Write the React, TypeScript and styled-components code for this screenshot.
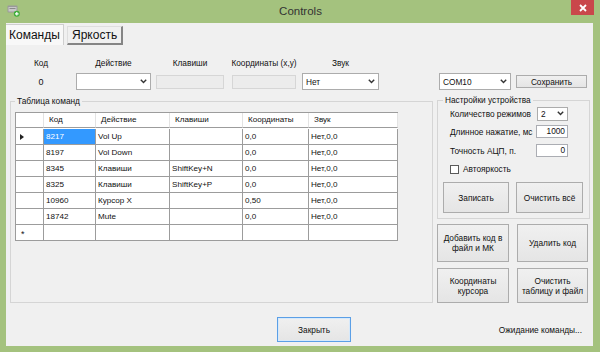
import React from "react";
import styled, { createGlobalStyle } from "styled-components";

const GlobalStyle = createGlobalStyle`
  html, body {
    margin: 0;
    padding: 0;
  }
  body {
    width: 600px;
    height: 352px;
    overflow: hidden;
    font-family: "Liberation Sans", Arial, sans-serif;
    color: #000;
  }
  * {
    box-sizing: border-box;
  }
`;

const Window = styled.div`
  width: 600px;
  height: 352px;
  background: #a4c27e;
  display: flex;
  flex-direction: column;
`;

const TitleBar = styled.div`
  height: 23px;
  flex: none;
  display: grid;
  grid-template-columns: 1fr auto 1fr;
  padding: 0 6px 0 7px;
`;

const TitleIcon = styled.svg`
  margin-top: 4px;
`;

const Title = styled.div`
  font-size: 11.5px;
  line-height: 22px;
  color: #333;
`;

const CloseBox = styled.div`
  justify-self: end;
  width: 23px;
  height: 15px;
  background: #c9474b;
  display: flex;
  align-items: center;
  justify-content: center;
`;

const Client = styled.div`
  flex: 1;
  margin: 0 7px 6px 6px;
  background: #f0f0f0;
  display: flex;
  flex-direction: column;
  font-size: 8.3px;
  color: #111;
`;

const TabStrip = styled.div`
  display: flex;
  align-items: flex-end;
  height: 22px;
  padding-top: 1px;
`;

const Tab = styled.div<{ $active?: boolean }>`
  font-size: 12px;
  width: ${(p) => (p.$active ? 58 : 56)}px;
  height: ${(p) => (p.$active ? 21 : 19)}px;
  margin-left: ${(p) => (p.$active ? 0 : 3)}px;
  padding-left: ${(p) => (p.$active ? 3 : 4)}px;
  line-height: ${(p) => (p.$active ? 20 : 16)}px;
  background: ${(p) => (p.$active ? "#f8f8f8" : "#f0f0f0")};
  border-top: 1px solid ${(p) => (p.$active ? "#cfcfcf" : "#dedede")};
  border-left: ${(p) => (p.$active ? "none" : "1px solid #dedede")};
  border-right: ${(p) => (p.$active ? "1px solid #cfcfcf" : "2px solid #858585")};
  border-bottom: ${(p) => (p.$active ? "none" : "2px solid #858585")};
  white-space: nowrap;
`;

const Body = styled.div`
  display: grid;
  grid-template-columns: 423px 153px;
  column-gap: 4px;
  padding: 13px 0 0 4px;
`;

const FieldsRow = styled.div`
  display: flex;
  align-items: flex-start;
`;

const Field = styled.div<{ $w: number; $ml: number }>`
  width: ${(p) => p.$w}px;
  margin-left: ${(p) => p.$ml}px;
  display: flex;
  flex-direction: column;
  align-items: center;
`;

const FieldLabel = styled.div`
  height: 11px;
  line-height: 11px;
  margin-bottom: 4px;
  white-space: nowrap;
`;

const Slot = styled.div`
  width: 100%;
  height: 17px;
  display: flex;
  align-items: center;
  justify-content: center;
`;

const Value = styled.span`
  font-size: 9px;
`;

const ComboBox = styled.div<{ $w?: number; $h?: number; $ml?: number }>`
  width: ${(p) => (p.$w ? `${p.$w}px` : "100%")};
  height: ${(p) => p.$h ?? 17}px;
  margin-left: ${(p) => p.$ml ?? 0}px;
  flex: none;
  background: #fff;
  border: 1px solid #acacac;
  display: flex;
  align-items: center;
  justify-content: space-between;
  padding: 0 3px 0 3px;
`;

const TextBox = styled.div<{ $disabled?: boolean; $w?: number; $h?: number }>`
  width: ${(p) => (p.$w ? `${p.$w}px` : "100%")};
  height: ${(p) => p.$h ?? 14}px;
  background: ${(p) => (p.$disabled ? "#ececec" : "#fff")};
  border: 1px solid ${(p) => (p.$disabled ? "#d6d6d6" : "#abadb3")};
  text-align: right;
  padding-right: 2px;
  line-height: ${(p) => (p.$h ?? 14) - 2}px;
`;

const TopRight = styled.div`
  padding-top: 15px;
  display: flex;
  align-items: center;
`;

const Button = styled.div<{ $w?: number; $h?: number; $ml?: number; $focus?: boolean }>`
  width: ${(p) => (p.$w ? `${p.$w}px` : "auto")};
  height: ${(p) => (p.$h ? `${p.$h}px` : "auto")};
  margin-left: ${(p) => p.$ml ?? 0}px;
  flex: none;
  background: linear-gradient(#f0f0f0, #e5e5e5);
  border: 1px solid ${(p) => (p.$focus ? "#5b9fe6" : "#acacac")};
  box-shadow: ${(p) => (p.$focus ? "inset 0 0 0 1px #d6e9fb" : "none")};
  display: flex;
  align-items: center;
  justify-content: center;
  text-align: center;
  line-height: 10px;
  padding: 0 2px;
`;

const Group = styled.fieldset<{ $h?: number; $mt: number; $pad: string }>`
  margin: ${(p) => p.$mt}px 0 0 0;
  min-width: 0;
  height: ${(p) => (p.$h ? `${p.$h}px` : "auto")};
  border: 1px solid #d5d5d5;
  padding: ${(p) => p.$pad};
`;

const Legend = styled.legend`
  font-size: 8.3px;
  line-height: 10px;
  padding: 0 2px;
`;

const GridView = styled.div`
  display: grid;
  grid-template-columns: 28px 52px 74px 73px 66px 89px;
  grid-auto-rows: 16px;
  width: 383px;
  border-top: 1px solid #9c9c9c;
  border-left: 1px solid #9c9c9c;
  background: #fff;
  font-size: 8.1px;
`;

const HeadCell = styled.div`
  height: 15px;
  background: #fff;
  border-right: 1px solid #e3e3e3;
  border-bottom: 1px solid #9c9c9c;
  padding-left: 5px;
  line-height: 14px;
  white-space: nowrap;
  &:last-child {
    border-right: 1px solid #9c9c9c;
  }
`;

const Cell = styled.div<{ $selected?: boolean }>`
  border-right: 1px solid #9c9c9c;
  border-bottom: 1px solid #9c9c9c;
  padding-left: 2px;
  line-height: 15px;
  white-space: nowrap;
  overflow: hidden;
  background: ${(p) => (p.$selected ? "#3399ff" : "#fff")};
  color: ${(p) => (p.$selected ? "#fff" : "#111")};
`;

const RowHead = styled.div`
  border-right: 1px solid #9c9c9c;
  border-bottom: 1px solid #9c9c9c;
  background: #fff;
  display: flex;
  align-items: center;
  padding-left: 4px;
`;

const CurrentMark = styled.span`
  width: 0;
  height: 0;
  border-top: 3px solid transparent;
  border-bottom: 3px solid transparent;
  border-left: 4px solid #222;
`;

const NewMark = styled.span`
  font-size: 9px;
  padding-left: 1px;
  padding-top: 3px;
`;

const RightColumn = styled.div`
  display: flex;
  flex-direction: column;
`;

const SettingRow = styled.div<{ $h: number }>`
  height: ${(p) => p.$h}px;
  display: flex;
  align-items: center;
  justify-content: space-between;
  padding: 0 16px 0 7px;
  white-space: nowrap;
`;

const CheckRow = styled.div`
  height: 18px;
  display: flex;
  align-items: center;
  gap: 4px;
  padding-left: 7px;
`;

const CheckBox = styled.span`
  width: 9px;
  height: 9px;
  border: 1px solid #5a5a5a;
  background: #fff;
`;

const ActionRow = styled.div`
  display: flex;
  gap: 7px;
  margin-top: 4px;
`;

const ButtonGrid = styled.div`
  display: grid;
  grid-template-columns: 72px 71px;
  grid-template-rows: 38px 35px;
  column-gap: 8px;
  row-gap: 6px;
  margin-top: 5px;
`;

const Footer = styled.div`
  display: flex;
  align-items: center;
  height: 25px;
  margin-top: 14px;
  padding-left: 271px;
`;

const Status = styled.div`
  margin-left: auto;
  margin-right: 11px;
  white-space: nowrap;
`;

const Chevron = () => (
  <svg width="7" height="5" viewBox="0 0 7 5">
    <polyline points="0.8,0.8 3.5,3.6 6.2,0.8" fill="none" stroke="#333" strokeWidth="1.4" />
  </svg>
);

const rows = [
  ["8217", "Vol Up", "", "0,0", "Нет,0,0"],
  ["8197", "Vol Down", "", "0,0", "Нет,0,0"],
  ["8345", "Клавиши", "ShiftKey+N", "0,0", "Нет,0,0"],
  ["8325", "Клавиши", "ShiftKey+P", "0,0", "Нет,0,0"],
  ["10960", "Курсор X", "", "0,50", "Нет,0,0"],
  ["18742", "Mute", "", "0,0", "Нет,0,0"],
];

const headers = ["", "Код", "Действие", "Клавиши", "Координаты", "Звук"];

export default function App() {
  return (
    <>
      <GlobalStyle />
      <Window>
        <TitleBar>
          <TitleIcon width="13" height="13" viewBox="0 0 13 13">
            <rect x="0.5" y="1.5" width="10" height="7" rx="1" fill="#9a9a9a" />
            <rect x="1.5" y="3" width="8" height="4.5" fill="#c8c8c8" />
            <rect x="2.5" y="4" width="6" height="1" fill="#8a8a8a" />
            <circle cx="9.8" cy="9.8" r="3" fill="#3fae3a" />
            <path d="M9.8 8v3.6M8 9.8h3.6" stroke="#fff" strokeWidth="1.2" />
          </TitleIcon>
          <Title>Controls</Title>
          <CloseBox>
            <svg width="8" height="8" viewBox="0 0 8 8">
              <path d="M1 1L7 7M7 1L1 7" stroke="#fff" strokeWidth="1.8" />
            </svg>
          </CloseBox>
        </TitleBar>
        <Client>
          <TabStrip>
            <Tab $active>Команды</Tab>
            <Tab>Яркость</Tab>
          </TabStrip>
          <Body>
            <FieldsRow>
              <Field $w={62} $ml={0}>
                <FieldLabel>Код</FieldLabel>
                <Slot>
                  <Value>0</Value>
                </Slot>
              </Field>
              <Field $w={75} $ml={4}>
                <FieldLabel>Действие</FieldLabel>
                <Slot>
                  <ComboBox>
                    <span />
                    <Chevron />
                  </ComboBox>
                </Slot>
              </Field>
              <Field $w={68} $ml={5}>
                <FieldLabel>Клавиши</FieldLabel>
                <Slot>
                  <TextBox $disabled />
                </Slot>
              </Field>
              <Field $w={64} $ml={8}>
                <FieldLabel>Координаты (x,y)</FieldLabel>
                <Slot>
                  <TextBox $disabled />
                </Slot>
              </Field>
              <Field $w={77} $ml={6}>
                <FieldLabel>Звук</FieldLabel>
                <Slot>
                  <ComboBox>
                    <span>Нет</span>
                    <Chevron />
                  </ComboBox>
                </Slot>
              </Field>
            </FieldsRow>
            <TopRight>
              <ComboBox $w={72} $ml={2}>
                <span>COM10</span>
                <Chevron />
              </ComboBox>
              <Button $w={71} $h={13} $ml={5}>
                Сохранить
              </Button>
            </TopRight>

            <Group $h={207} $mt={6} $pad="6px 4px 0 4px">
              <Legend>Таблица команд</Legend>
              <GridView>
                {headers.map((h, i) => (
                  <HeadCell key={i}>{h}</HeadCell>
                ))}
                {rows.map((r, i) => (
                  <React.Fragment key={i}>
                    <RowHead>{i === 0 && <CurrentMark />}</RowHead>
                    {r.map((v, j) => (
                      <Cell key={j} $selected={i === 0 && j === 0}>
                        {v}
                      </Cell>
                    ))}
                  </React.Fragment>
                ))}
                <RowHead>
                  <NewMark>*</NewMark>
                </RowHead>
                {rows[0].map((_, j) => (
                  <Cell key={j} />
                ))}
              </GridView>
            </Group>

            <RightColumn>
              <Group $mt={5} $pad="0 5px 5px 5px">
                <Legend>Настройки устройства</Legend>
                <SettingRow $h={17}>
                  <span>Количество режимов</span>
                  <ComboBox $w={31} $h={14}>
                    <span>2</span>
                    <Chevron />
                  </ComboBox>
                </SettingRow>
                <SettingRow $h={19}>
                  <span>Длинное нажатие, мс</span>
                  <TextBox $w={32} $h={13}>
                    1000
                  </TextBox>
                </SettingRow>
                <SettingRow $h={19}>
                  <span>Точность АЦП, п.</span>
                  <TextBox $w={32} $h={13}>
                    0
                  </TextBox>
                </SettingRow>
                <CheckRow>
                  <CheckBox />
                  <span>Автояркость</span>
                </CheckRow>
                <ActionRow>
                  <Button $w={66} $h={31}>
                    Записать
                  </Button>
                  <Button $w={67} $h={31}>
                    Очистить всё
                  </Button>
                </ActionRow>
              </Group>
              <ButtonGrid>
                <Button>
                  Добавить код в
                  <br />
                  файл и МК
                </Button>
                <Button>Удалить код</Button>
                <Button>
                  Координаты
                  <br />
                  курсора
                </Button>
                <Button>
                  Очистить
                  <br />
                  таблицу и файл
                </Button>
              </ButtonGrid>
            </RightColumn>
          </Body>
          <Footer>
            <Button $w={74} $h={25} $focus>
              Закрыть
            </Button>
            <Status>Ожидание команды...</Status>
          </Footer>
        </Client>
      </Window>
    </>
  );
}
